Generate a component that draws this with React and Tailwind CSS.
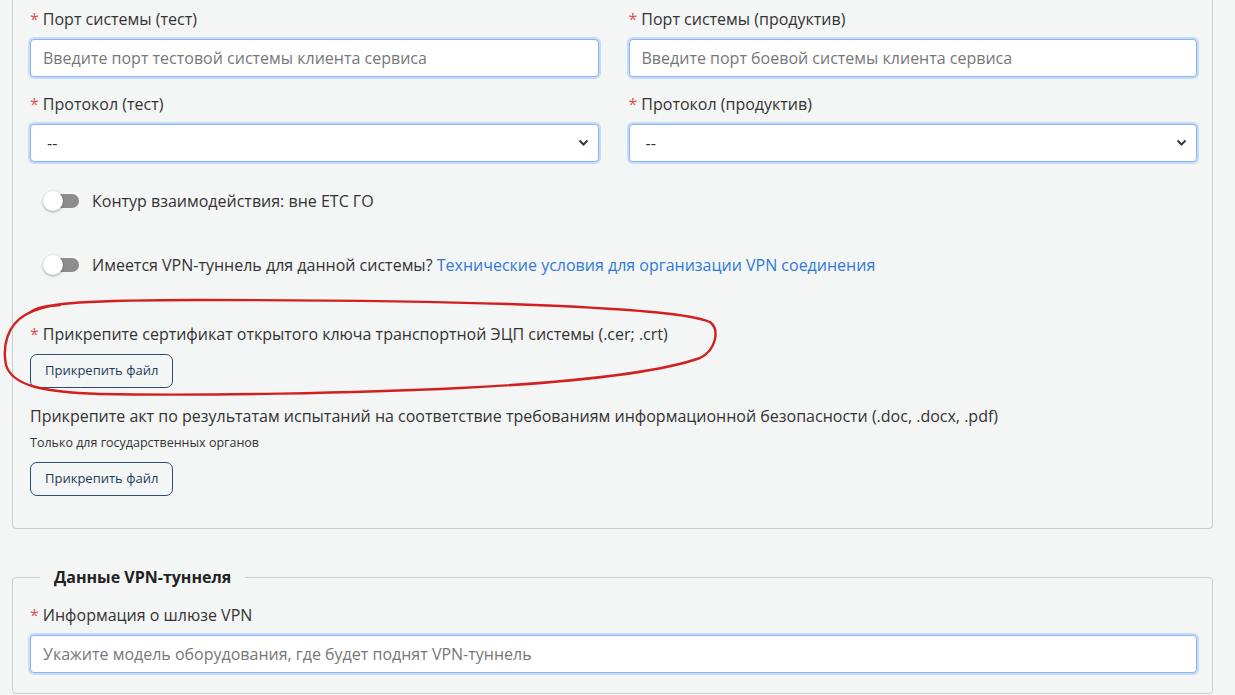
import React from 'react';

const Label = ({ children, required }) => (
    <div className="text-[16px] leading-6 text-[#333] mb-2">
        {required && <span className="text-[#e0514b] mr-1">*</span>}
        {children}
    </div>
);

const TextInput = ({ placeholder }) => (
    <input
        type="text"
        placeholder={placeholder}
        className="w-full h-[38px] px-3 text-[16px] text-[#333] bg-white rounded border border-[#86b7fe] shadow-[0_0_0_2px_rgba(120,170,240,0.35)] outline-none placeholder:text-[#777]"
    />
);

const Select = () => (
    <div className="relative">
        <select className="w-full h-[38px] pl-4 pr-8 text-[16px] text-[#333] bg-white rounded border border-[#86b7fe] shadow-[0_0_0_2px_rgba(120,170,240,0.35)] outline-none appearance-none">
            <option>--</option>
        </select>
        <svg className="absolute right-[10px] top-[15px] pointer-events-none" width="11" height="8" viewBox="0 0 11 8">
            <path d="M1.5 1.5 L5.5 5.5 L9.5 1.5" fill="none" stroke="#343a40" strokeWidth="2" />
        </svg>
    </div>
);

const Toggle = ({ children }) => (
    <div className="flex items-center pl-[13px]">
        <div className="relative w-[36px] h-[20px] mr-[13px] shrink-0">
            <div className="absolute left-[6px] right-0 top-[3px] h-[14px] rounded-full bg-[#8d8d8d]" />
            <div className="absolute left-0 top-0 w-[20px] h-[20px] rounded-full bg-white shadow-[0_1px_3px_rgba(0,0,0,0.35)]" />
        </div>
        <div className="text-[16px] leading-6 text-[#333]">{children}</div>
    </div>
);

const FileButton = () => (
    <button className="h-[34px] px-[14px] text-[13px] text-[#1d3a5c] border border-[#2e4d70] rounded-[7px] bg-transparent">
        Прикрепить файл
    </button>
);

export default function App() {
    return (
        <div className="relative min-h-screen bg-[#f4f5f5] overflow-hidden" style={{ fontFamily: '"Open Sans", "Liberation Sans", sans-serif' }}>
            {/* Основной блок */}
            <div className="ml-[12px] w-[1201px] border-x border-b border-[#cfcfcf] rounded-b pl-[17px] pr-[15px] pt-[7px] pb-[32px]">
                <div className="grid grid-cols-2 gap-x-[30px]">
                    <div>
                        <Label required>Порт системы (тест)</Label>
                        <TextInput placeholder="Введите порт тестовой системы клиента сервиса" />
                    </div>
                    <div>
                        <Label required>Порт системы (продуктив)</Label>
                        <TextInput placeholder="Введите порт боевой системы клиента сервиса" />
                    </div>
                    <div className="mt-[15px]">
                        <Label required>Протокол (тест)</Label>
                        <Select />
                    </div>
                    <div className="mt-[15px]">
                        <Label required>Протокол (продуктив)</Label>
                        <Select />
                    </div>
                </div>

                <div className="mt-[27px]">
                    <Toggle>Контур взаимодействия: вне ЕТС ГО</Toggle>
                </div>
                <div className="mt-[40px]">
                    <Toggle>
                        Имеется VPN-туннель для данной системы?{' '}
                        <a href="#" className="text-[#2f7ad8]">Технические условия для организации VPN соединения</a>
                    </Toggle>
                </div>

                <div className="mt-[45px]">
                    <Label required>Прикрепите сертификат открытого ключа транспортной ЭЦП системы (.cer; .crt)</Label>
                    <div className="mt-[1px]">
                        <FileButton />
                    </div>
                </div>

                <div className="mt-[16px]">
                    <div className="text-[16px] leading-6 text-[#333]">
                        Прикрепите акт по результатам испытаний на соответствие требованиям информационной безопасности (.doc, .docx, .pdf)
                    </div>
                    <div className="text-[12.5px] leading-5 text-[#333] mt-[5px] mb-[9px]">Только для государственных органов</div>
                    <FileButton />
                </div>
            </div>

            {/* Данные VPN-туннеля */}
            <fieldset className="ml-[12px] mt-[36px] w-[1201px] border border-[#cfcfcf] rounded pl-[17px] pr-[15px] pb-[20px]">
                <legend className="ml-[10px] px-[14px] text-[16px] font-bold text-[#222] leading-6">Данные VPN-туннеля</legend>
                <div className="mt-[14px]">
                    <Label required>Информация о шлюзе VPN</Label>
                    <TextInput placeholder="Укажите модель оборудования, где будет поднят VPN-туннель" />
                </div>
            </fieldset>

            {/* Красная пометка от руки */}
            <svg className="absolute left-0 top-0 pointer-events-none" width="1235" height="695">
                <path
                    d="M32 311 C 45 303, 90 300, 200 300 C 330 300, 450 301, 560 306 C 640 310, 690 314, 710 322 C 720 330, 716 350, 700 358 C 660 372, 580 382, 460 388 C 360 393, 200 396, 100 394 C 40 392, 12 385, 6 365 C 2 345, 8 325, 25 315 C 35 309, 45 306, 60 305"
                    fill="none"
                    stroke="#d22020"
                    strokeWidth="2.4"
                    strokeLinecap="round"
                    strokeLinejoin="round"
                />
            </svg>
        </div>
    );
}
